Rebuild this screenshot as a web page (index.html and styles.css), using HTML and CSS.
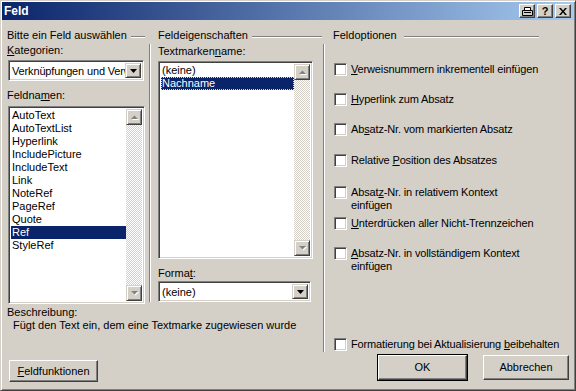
FILE: index.html
```html
<!DOCTYPE html>
<html lang="de">
<head>
<meta charset="utf-8">
<title>Feld</title>
<link rel="stylesheet" href="styles.css">
</head>
<body>
<div class="window">
  <div class="titlebar">
    <span class="title">Feld</span>
    <div class="tb-buttons">
      <span class="tbtn"><svg width="11" height="9" viewBox="0 0 11 9"><path d="M2.5 0.5h6v3h-6z" fill="#fff" stroke="#000"/><path d="M0.5 3.5h10v5h-10z" fill="#d4d0c8" stroke="#000"/><path d="M2 5.5h7" stroke="#000"/></svg></span>
      <span class="tbtn q">?</span>
      <span class="tbtn"><svg width="8" height="7" viewBox="0 0 8 7"><path d="M0 0h2l2 2.5L6 0h2L5 3.5 8 7H6L4 4.5 2 7H0l3-3.5z" fill="#000"/></svg></span>
    </div>
  </div>
  <div class="content">
    <div class="upper">
      <div class="left-area">
        <div class="cols">
          <div class="col-left">
            <div class="ghead"><span>Bitte ein Feld auswählen</span><i class="hline"></i></div>
            <div class="label lbl-kat"><u>K</u>ategorien:</div>
            <div class="combo combo-kat"><span class="combo-text">Verknüpfungen und Verweise</span><span class="dd"><svg width="7" height="4" viewBox="0 0 7 4"><path d="M0 0h7L3.5 4z" fill="#000"/></svg></span></div>
            <div class="label lbl-fn">Feldna<u>m</u>en:</div>
            <div class="listbox lb-fn">
              <ul class="items">
                <li>AutoText</li>
                <li>AutoTextList</li>
                <li>Hyperlink</li>
                <li>IncludePicture</li>
                <li>IncludeText</li>
                <li>Link</li>
                <li>NoteRef</li>
                <li>PageRef</li>
                <li>Quote</li>
                <li class="sel">Ref</li>
                <li>StyleRef</li>
              </ul>
              <div class="vscroll">
                <span class="sbtn"><svg width="9" height="6" viewBox="0 0 9 6"><path d="M1 5h7L4.5 1.5z" fill="#fff" transform="translate(1 1)"/><path d="M1 5h7L4.5 1.5z" fill="#808080"/></svg></span>
                <span class="track"></span>
                <span class="sbtn"><svg width="9" height="6" viewBox="0 0 9 6"><path d="M1 1h7L4.5 4.5z" fill="#fff" transform="translate(1 1)"/><path d="M1 1h7L4.5 4.5z" fill="#808080"/></svg></span>
              </div>
            </div>
          </div>
          <div class="col-mid">
            <div class="ghead gh-mid"><span>Feldeigenschaften</span><i class="hline"></i></div>
            <div class="gbody gb-mid">
              <div class="label lbl-tm">Textmarken<u>n</u>ame:</div>
              <div class="listbox lb-tm">
                <ul class="items">
                  <li>(keine)</li>
                  <li class="sel focus">Nachname</li>
                </ul>
                <div class="vscroll">
                  <span class="sbtn"><svg width="9" height="6" viewBox="0 0 9 6"><path d="M1 5h7L4.5 1.5z" fill="#fff" transform="translate(1 1)"/><path d="M1 5h7L4.5 1.5z" fill="#808080"/></svg></span>
                  <span class="track"></span>
                  <span class="sbtn"><svg width="9" height="6" viewBox="0 0 9 6"><path d="M1 1h7L4.5 4.5z" fill="#fff" transform="translate(1 1)"/><path d="M1 1h7L4.5 4.5z" fill="#808080"/></svg></span>
                </div>
              </div>
              <div class="label lbl-fmt">Forma<u>t</u>:</div>
              <div class="combo combo-fmt"><span class="combo-text">(keine)</span><span class="dd"><svg width="7" height="4" viewBox="0 0 7 4"><path d="M0 0h7L3.5 4z" fill="#000"/></svg></span></div>
            </div>
          </div>
        </div>
        <div class="desc">
          <div class="label">Beschreibung:</div>
          <div class="desc-text">Fügt den Text ein, dem eine Textmarke zugewiesen wurde</div>
        </div>
      </div>
      <div class="col-right">
        <div class="ghead gh-right"><span>Feldoptionen</span><i class="hline"></i></div>
        <div class="gbody gb-right">
          <div class="cb r1"><span class="box"></span><span class="cbl"><u>V</u>erweisnummern inkrementell einfügen</span></div>
          <div class="cb r2"><span class="box"></span><span class="cbl"><u>H</u>yperlink zum Absatz</span></div>
          <div class="cb r3"><span class="box"></span><span class="cbl">Ab<u>s</u>atz-Nr. vom markierten Absatz</span></div>
          <div class="cb r4"><span class="box"></span><span class="cbl">Relative <u>P</u>osition des Absatzes</span></div>
          <div class="cb r5"><span class="box"></span><span class="cbl">Absat<u>z</u>-Nr. in relativem Kontext<br>einfügen</span></div>
          <div class="cb r6"><span class="box"></span><span class="cbl"><u>U</u>nterdrücken aller Nicht-Trennzeichen</span></div>
          <div class="cb r7"><span class="box"></span><span class="cbl"><u>A</u>bsatz-Nr. in vollständigem Kontext<br>einfügen</span></div>
          <div class="cb r8"><span class="box"></span><span class="cbl">Formatierung bei Aktualisierung <u>b</u>eibehalten</span></div>
        </div>
      </div>
    </div>
    <div class="buttons">
      <span class="btn btn-ff"><u>F</u>eldfunktionen</span>
      <span class="btn btn-ok">OK</span>
      <span class="btn btn-cancel">Abbrechen</span>
    </div>
  </div>
</div>
</body>
</html>
```
FILE: styles.css
```css
* { box-sizing: border-box; margin: 0; padding: 0; }
html, body { margin: 0; background: #d4d0c8; }
body { font: 11px/13px "Liberation Sans", Arial, sans-serif; color: #000; }
u { text-decoration: underline; text-underline-offset: 1px; }

.window {
  width: 576px; height: 391px;
  display: flex; flex-direction: column;
  padding: 1px;
  border: 1px solid; border-color: #d4d0c8 #404040 #404040 #d4d0c8;
  box-shadow: inset 1px 1px #fff, inset -1px -1px #808080;
  background: #d4d0c8;
}

.titlebar {
  height: 18px; flex: none;
  display: flex; align-items: center; justify-content: space-between;
  padding: 0 3px 0 2px;
  background: linear-gradient(to right, #0a246a, #a6caf0);
  color: #fff;
}
.title { font-weight: bold; font-size: 12px; }
.tb-buttons { display: flex; gap: 2px; }
.tbtn {
  width: 16px; height: 14px;
  display: flex; align-items: center; justify-content: center;
  background: #d4d0c8; color: #000;
  border: 1px solid; border-color: #fff #404040 #404040 #fff;
  box-shadow: inset -1px -1px #808080;
}
.tbtn.q { font-weight: bold; font-size: 11px; line-height: 12px; }

.content { flex: 1; display: flex; flex-direction: column; padding: 9px 0 0 5px; }
.upper { display: flex; height: 323px; }
.left-area { width: 316px; display: flex; flex-direction: column; }
.cols { display: flex; height: 275px; }
.col-left { width: 139px; display: flex; flex-direction: column; }
.col-mid { width: 174px; margin-left: 3px; display: flex; flex-direction: column; }
.col-right { flex: 1; display: flex; flex-direction: column; }

.ghead { display: flex; align-items: flex-start; height: 13px; white-space: nowrap; }
.ghead .hline {
  flex: 1; height: 2px; margin: 7px 1px 0 4px;
  border-top: 1px solid #808080; border-bottom: 1px solid #fff;
}
.gh-mid { padding-left: 9px; }
.gh-mid .hline { margin-right: 1px; }
.gh-right { padding-left: 10px; }
.gh-right .hline { margin-right: 35px; margin-left: 7px; }

.gbody {
  margin-top: 2px;
  border-left: 1px solid #808080;
  box-shadow: inset 1px 0 #fff;
  display: flex; flex-direction: column;
}
.gb-mid { padding-left: 8px; height: 258px; }
.gb-right { padding-left: 10px; height: 308px; }

.label { white-space: nowrap; }
.lbl-kat { margin-top: 2px; }
.lbl-fn { margin-top: 8px; }
.lbl-tm { margin-top: 1px; }
.lbl-fmt { margin-top: 8px; }

.combo, .listbox {
  background: #fff;
  border: 1px solid; border-color: #808080 #fff #fff #808080;
  box-shadow: inset 1px 1px #404040, inset -1px -1px #d4d0c8;
  padding: 2px;
  display: flex;
}
.combo { height: 21px; align-items: stretch; }
.combo-kat { margin: 3px 0 0 1px; width: 136px; }
.combo-fmt { margin-top: 1px; width: 153px; }
.combo-text { flex: 1; overflow: hidden; white-space: nowrap; padding-left: 1px; line-height: 17px; }
.combo-kat .combo-text { letter-spacing: -0.15px; }
.dd {
  width: 16px; flex: none;
  display: flex; align-items: center; justify-content: center;
  background: #d4d0c8;
  border: 1px solid; border-color: #d4d0c8 #404040 #404040 #d4d0c8;
  box-shadow: inset 1px 1px #fff, inset -1px -1px #808080;
}

.listbox { align-items: stretch; }
.lb-fn { margin: 4px 0 0 1px; width: 137px; height: 198px; }
.lb-tm { margin-top: 3px; width: 155px; height: 200px; }
.items { list-style: none; flex: 1; min-width: 0; }
.items li { height: 13px; line-height: 13px; padding-left: 1px; white-space: nowrap; }
.items li.sel { background: #0a246a; color: #fff; }
.items li.focus { outline: 1px dotted #f5db95; outline-offset: -1px; }

.vscroll { width: 16px; flex: none; display: flex; flex-direction: column; }
.sbtn {
  width: 16px; height: 16px; flex: none;
  display: flex; align-items: center; justify-content: center;
  background: #d4d0c8;
  border: 1px solid; border-color: #d4d0c8 #404040 #404040 #d4d0c8;
  box-shadow: inset 1px 1px #fff, inset -1px -1px #808080;
}
.track {
  flex: 1;
  background: repeating-conic-gradient(#fff 0 25%, #d4d0c8 0 50%) 0 0 / 2px 2px;
}

.desc { margin-top: 2px; }
.desc-text { padding-left: 6px; white-space: nowrap; }

.cb { display: flex; align-items: flex-start; gap: 4px; white-space: nowrap; }
.cbl { letter-spacing: -0.15px; }
.box {
  width: 13px; height: 13px; flex: none;
  background: #fff;
  border: 1px solid; border-color: #808080 #fff #fff #808080;
  box-shadow: inset 1px 1px #404040, inset -1px -1px #d4d0c8;
}
.r1 { margin-top: 19px; }
.r2 { margin-top: 17px; }
.r3 { margin-top: 17px; }
.r4 { margin-top: 18px; }
.r5 { margin-top: 19px; }
.r6 { margin-top: 5px; }
.r7 { margin-top: 17px; }
.r8 { margin-top: 65px; }

.buttons { display: flex; align-items: flex-start; margin-top: 3px; padding-right: 5px; }
.btn {
  display: flex; align-items: center; justify-content: center;
  background: #d4d0c8; white-space: nowrap;
  border: 1px solid; border-color: #fff #404040 #404040 #fff;
  box-shadow: inset -1px -1px #808080, inset 1px 1px #d4d0c8;
}
.btn-ff { margin: 5px 0 0 2px; width: 89px; height: 22px; }
.btn-ok {
  margin-left: auto; width: 89px; height: 25px;
  outline: 1px solid #000;
}
.btn-cancel { margin-left: 16px; width: 86px; height: 25px; }
```
